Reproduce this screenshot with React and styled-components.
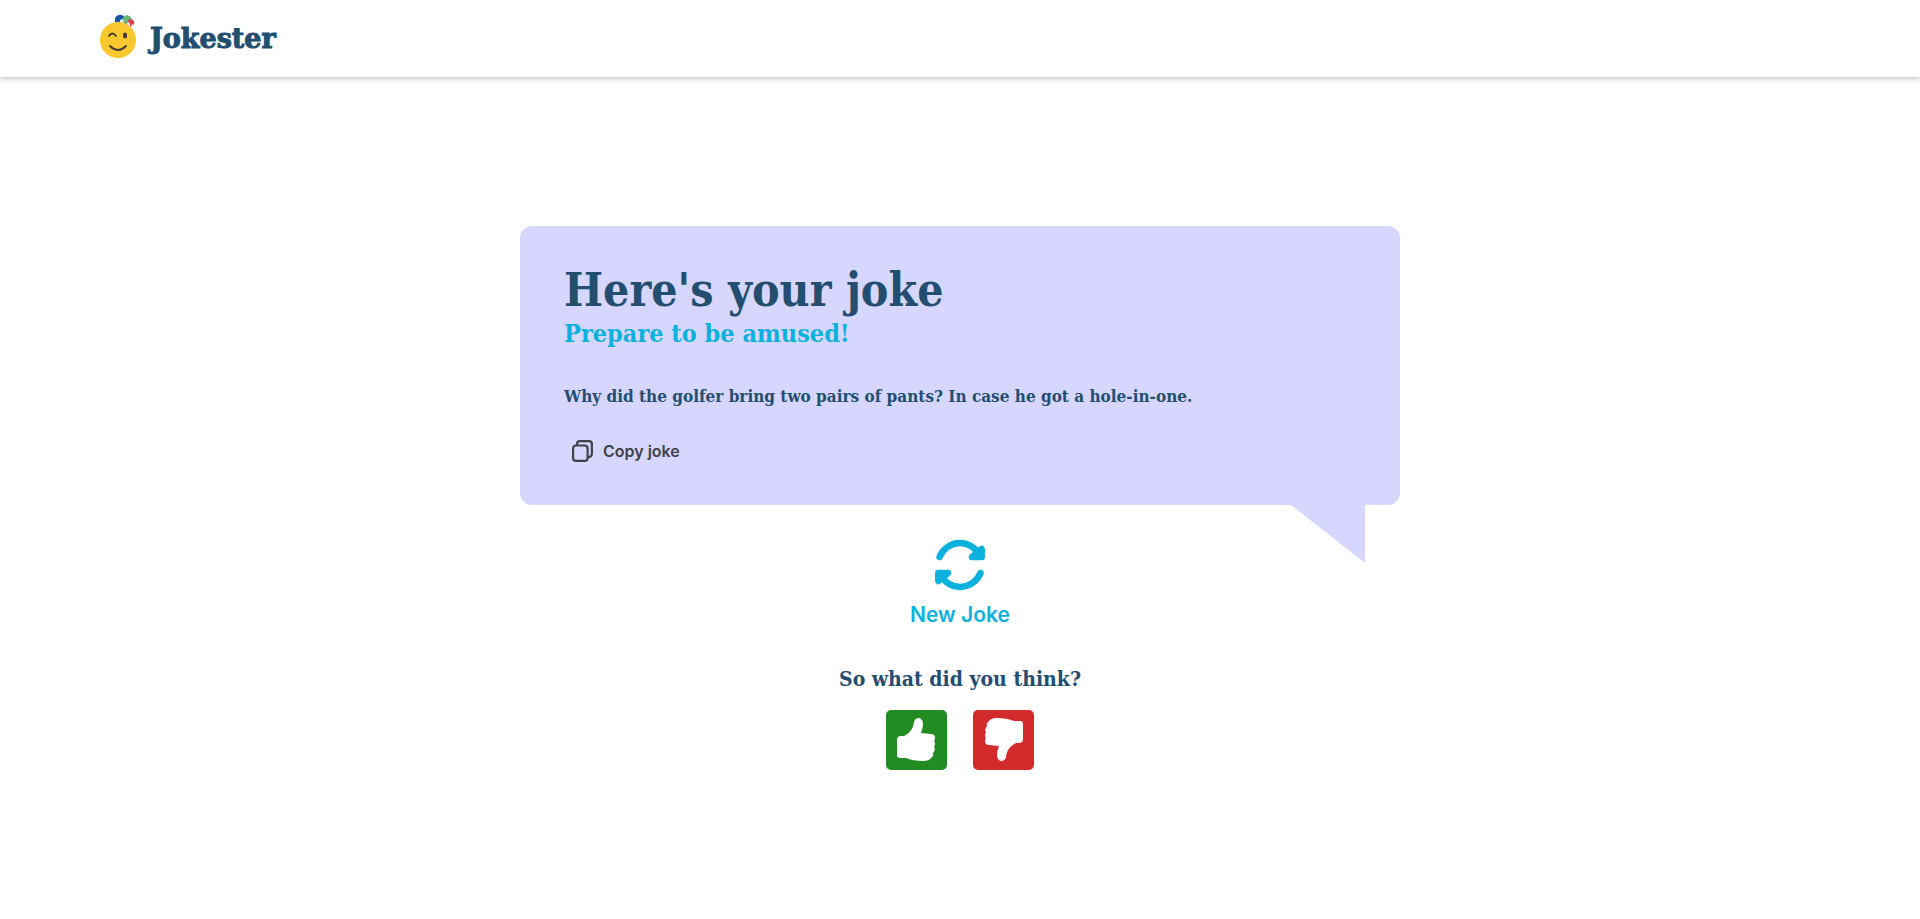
import React from "react";
import styled, { createGlobalStyle } from "styled-components";

const navy = "#234e70";
const cyan = "#0cb1dc";
const lilac = "#d6d6ff";
const slab = `"DejaVu Serif Condensed", "DejaVu Serif", serif`;
const wideSlab = `"DejaVu Serif", serif`;
const sans = `Inter, "Open Sans", sans-serif`;

const GlobalStyle = createGlobalStyle`
  *, *::before, *::after { box-sizing: border-box; }
  body { margin: 0; background: #fff; font-family: ${sans}; }
  h1, h2, p { margin: 0; }
  button { border: 0; padding: 0; background: none; cursor: pointer; font-family: ${sans}; }
  svg { display: block; flex: none; }
`;

const Page = styled.div`
  min-height: 100vh;
  display: flex;
  flex-direction: column;
`;

const Header = styled.header`
  height: 77px;
  padding: 0 98px;
  display: flex;
  align-items: center;
  box-shadow: 0 1px 6px rgba(0, 0, 0, 0.3);
`;

const Brand = styled.a`
  display: flex;
  align-items: center;
  gap: 12px;
  color: ${navy};
  font: bold 27px/32px ${wideSlab};
  -webkit-text-stroke: 1px ${navy};
  text-decoration: none;
`;

const Main = styled.main`
  flex: 1;
  display: flex;
  flex-direction: column;
  align-items: center;
  justify-content: center;
  padding: 16px;
`;

const Bubble = styled.section`
  position: relative;
  width: 100%;
  max-width: 880px;
  padding: 40px 44px 36px;
  border-radius: 12px;
  background: ${lilac};

  &::after {
    content: "";
    position: absolute;
    top: 100%;
    right: 35px;
    width: 74px;
    height: 58px;
    background: ${lilac};
    clip-path: polygon(0 0, 100% 0, 100% 100%);
  }
`;

const Title = styled.h1`
  color: ${navy};
  font: bold 46px/48px ${slab};
`;

const Subtitle = styled.p`
  color: ${cyan};
  font: bold 25px/39px ${slab};
`;

const Joke = styled.p`
  margin: 31px 0 25px;
  color: ${navy};
  font: bold 17px/24px ${slab};
`;

const CopyButton = styled.button`
  display: flex;
  align-items: center;
  gap: 10px;
  height: 36px;
  margin-left: 8px;
  color: #414149;
  font-size: 16px;
  font-weight: 600;
`;

const NewJokeButton = styled.button`
  display: flex;
  flex-direction: column;
  align-items: center;
  gap: 8px;
  margin-top: 34px;
  color: ${cyan};
  font-size: 21px;
  font-weight: 600;
  line-height: 32px;
`;

const Question = styled.h2`
  margin: 32px 0 15px;
  color: ${navy};
  font: bold 21px/32px ${slab};
`;

const Votes = styled.div`
  display: flex;
  gap: 26px;
`;

const VoteButton = styled.button`
  display: grid;
  place-items: center;
  width: 61px;
  height: 60px;
  border-radius: 5px;
  background: ${(p) => p.$color};
`;

const Logo = () => (
  <svg width="40" height="50" viewBox="0 0 40 50" aria-hidden="true">
    <path d="M17 8Q16 2 21 1Q25 0 27 4L26 10H20Z" fill="#1857a8" />
    <path d="M24 9Q24 2 29 1Q33 2 34 6L30 12Z" fill="#66b878" />
    <path d="M22 6L25 5L26 10L22 10Z" fill="#e8eef0" />
    <path d="M29 11Q29 5 33 5Q37 6 36 11L34 10L33 14Z" fill="#d9414e" />
    <path d="M29 9L31 8L33 14L29 12Z" fill="#e8eef0" />
    <circle cx="20" cy="26" r="18" fill="#f8c82e" />
    <path d="M11 22Q14 17 18 22M12 32Q20 40 28 32" fill="none" stroke="#473b38" strokeWidth="1.8" strokeLinecap="round" />
    <ellipse cx="27" cy="21.5" rx="2" ry="3" fill="#473b38" />
  </svg>
);

const CopyIcon = () => (
  <svg width="21" height="22" viewBox="0 0 21 22" fill="none" stroke="currentColor" strokeWidth="2.2" aria-hidden="true">
    <rect x="1.1" y="5.5" width="14.5" height="15.4" rx="3" />
    <path d="M5 5.5V4.1Q5 1.1 8 1.1H16.9Q19.9 1.1 19.9 4.1V13.5Q19.9 17 15.6 17.3" />
  </svg>
);

const RefreshIcon = () => (
  <svg width="52" height="52" viewBox="0 0 52 52" fill="none" stroke="currentColor" strokeWidth="6.5" strokeLinecap="round" strokeLinejoin="round" aria-hidden="true">
    <path d="M5.5 18A22 22 0 0 1 46 17M47.700 10V18H38ZM46.500 34A22 22 0 0 1 6 35M4.300 42V34H14Z" />
  </svg>
);

const Thumb = ({ down }) => (
  <svg width="42" height="44" viewBox="0 0 42 44" fill="#fff" aria-hidden="true">
    <path
      transform={down ? "rotate(180 20.500 21.500)" : undefined}
      d="M1 22Q1 18 5 18H8C14 15 17 11 18 4Q19 0 23 0Q27 1 27 6Q27 10 25 15L35 16Q39 16 39 20Q39 22 38 23Q40 25 38 29Q40 31 37 35Q38 38 35 40Q33 43 27 43Q17 43 10 40H4Q1 40 1 37Z"
    />
  </svg>
);

export default function App() {
  return (
    <Page>
      <GlobalStyle />
      <Header>
        <Brand href="#"><Logo />Jokester</Brand>
      </Header>
      <Main>
        <Bubble>
          <Title>Here's your joke</Title>
          <Subtitle>Prepare to be amused!</Subtitle>
          <Joke>Why did the golfer bring two pairs of pants? In case he got a hole-in-one.</Joke>
          <CopyButton type="button"><CopyIcon />Copy joke</CopyButton>
        </Bubble>
        <NewJokeButton type="button"><RefreshIcon />New Joke</NewJokeButton>
        <Question>So what did you think?</Question>
        <Votes>
          <VoteButton type="button" aria-label="Thumbs up" $color="#228b22"><Thumb /></VoteButton>
          <VoteButton type="button" aria-label="Thumbs down" $color="#d32b2b"><Thumb down /></VoteButton>
        </Votes>
      </Main>
    </Page>
  );
}
